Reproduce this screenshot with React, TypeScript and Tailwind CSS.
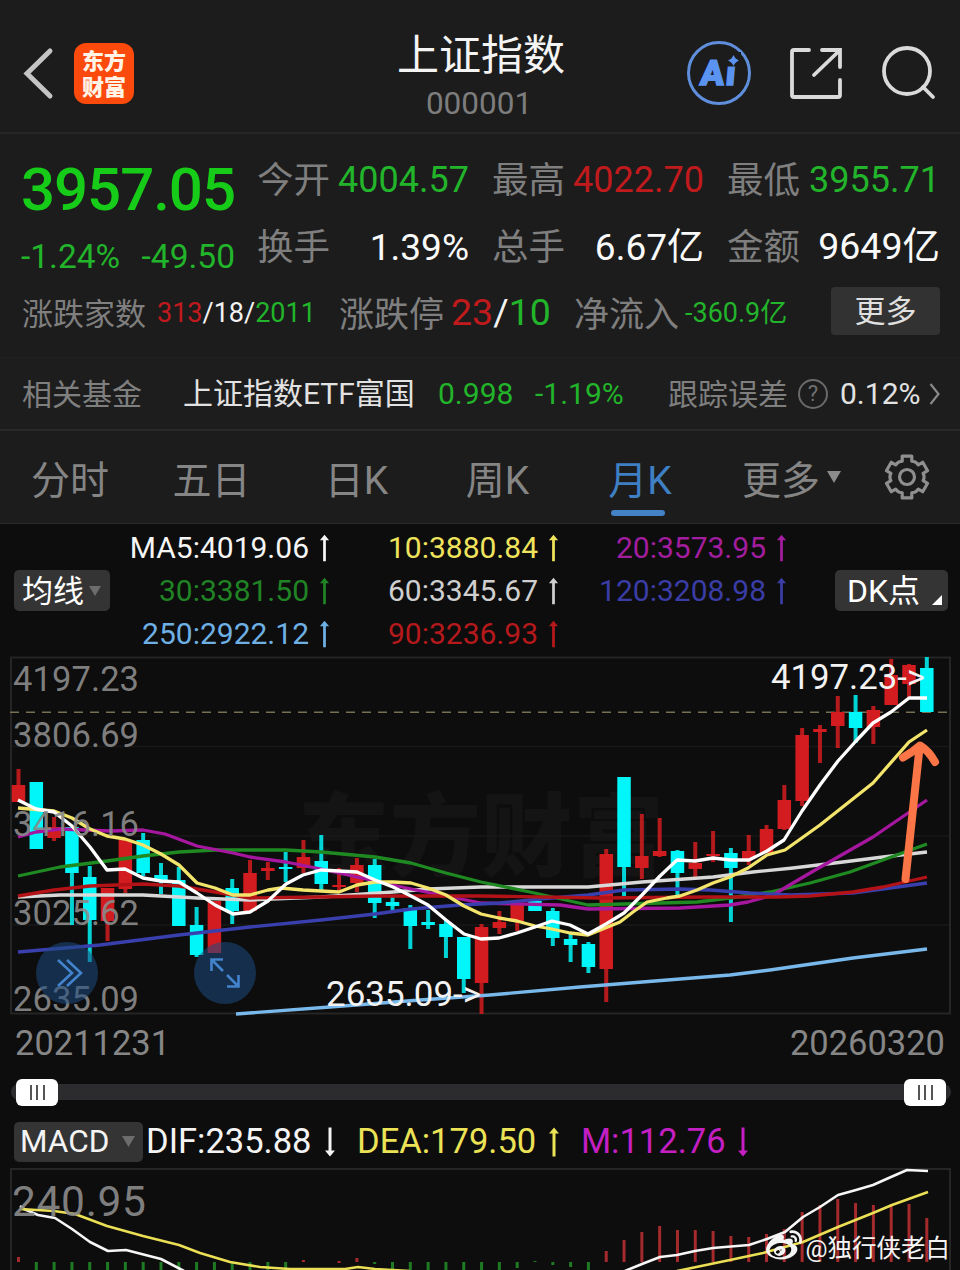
import { clsx } from "clsx";
import { FaWeibo } from "react-icons/fa";

type Candle = [top: number, bottom: number, high: number, low: number, dir: "u" | "d"];
type Point = [number, number];

const START_X = 18.5;
const STEP = 17.81;

const candles: Candle[] = [
  [785, 802, 769, 802, "u"],
  [782, 849, 782, 849, "d"],
  [827, 838, 817, 841, "u"],
  [827, 873, 827, 925, "d"],
  [877, 920, 866, 962, "d"],
  [888, 921, 888, 941, "u"],
  [840, 889, 840, 893, "u"],
  [840, 873, 833, 876, "d"],
  [875, 881, 863, 894, "d"],
  [880, 926, 867, 926, "d"],
  [925, 955, 907, 957, "d"],
  [901, 953, 901, 953, "u"],
  [888, 911, 879, 924, "d"],
  [873, 911, 860, 911, "u"],
  [868, 871, 862, 880, "u"],
  [867, 869, 852, 882, "d"],
  [857, 868, 840, 873, "u"],
  [861, 884, 835, 891, "d"],
  [885, 887, 868, 892, "u"],
  [865, 883, 858, 892, "u"],
  [865, 903, 859, 918, "d"],
  [902, 906, 897, 911, "d"],
  [908, 926, 905, 949, "d"],
  [922, 925, 910, 929, "d"],
  [924, 937, 920, 958, "d"],
  [937, 979, 937, 993, "d"],
  [927, 983, 924, 1014, "u"],
  [922, 928, 911, 934, "u"],
  [904, 921, 902, 931, "u"],
  [901, 911, 897, 911, "d"],
  [911, 938, 908, 946, "d"],
  [939, 945, 932, 962, "d"],
  [944, 967, 942, 973, "d"],
  [854, 969, 849, 1002, "u"],
  [777, 867, 777, 896, "d"],
  [856, 868, 814, 879, "u"],
  [851, 856, 818, 857, "u"],
  [851, 873, 850, 895, "d"],
  [863, 869, 842, 879, "u"],
  [854, 856, 831, 862, "u"],
  [853, 868, 848, 922, "d"],
  [851, 859, 835, 865, "u"],
  [829, 853, 825, 853, "u"],
  [800, 829, 785, 830, "u"],
  [735, 801, 728, 806, "u"],
  [729, 732, 725, 763, "u"],
  [712, 726, 696, 748, "u"],
  [712, 728, 695, 743, "d"],
  [710, 727, 706, 744, "u"],
  [675, 705, 659, 705, "u"],
  [665, 684, 664, 697, "u"],
  [668, 712, 657, 712, "d"],
];

const ma5: Point[] = [
  [18, 800], [36, 809], [54, 812], [72, 826], [90, 847], [107, 870], [125, 869], [143, 878], [161, 881], [179, 882],
  [197, 893], [215, 905], [233, 914], [250, 912], [268, 901], [286, 884], [303, 875], [321, 870], [339, 871],
  [357, 872], [375, 880], [393, 887], [411, 896], [428, 905], [446, 920], [464, 934], [481, 939], [499, 938],
  [517, 933], [535, 927], [552, 921], [570, 925], [588, 934], [606, 924], [624, 913], [642, 895], [660, 876],
  [677, 860], [695, 861], [713, 858], [731, 860], [749, 860], [767, 851], [784, 840], [802, 811], [820, 785],
  [838, 761], [856, 741], [873, 723], [891, 712], [909, 698], [927, 698],
];
const ma10: Point[] = [
  [18, 808], [54, 811], [72, 818], [90, 829], [107, 836], [125, 839], [143, 845], [161, 854], [179, 865], [197, 883],
  [215, 888], [233, 895], [250, 895], [268, 890], [281, 888], [303, 890], [321, 891], [339, 892], [357, 885],
  [375, 882], [393, 882], [411, 883], [428, 888], [446, 895], [464, 906], [481, 914], [499, 918], [517, 921],
  [535, 926], [552, 929], [570, 933], [588, 935], [620, 922], [633, 912], [647, 902], [667, 898], [680, 896],
  [697, 890], [713, 883], [730, 877], [748, 868], [767, 855], [785, 850], [820, 825], [873, 783], [909, 742],
  [927, 730],
];
const ma20: Point[] = [
  [18, 837], [36, 832], [60, 829], [110, 831], [143, 830], [165, 834], [197, 846], [233, 853], [250, 857],
  [286, 862], [321, 869], [357, 877], [375, 881], [411, 889], [446, 896], [481, 903], [560, 905], [588, 909],
  [680, 908], [730, 905], [748, 902], [773, 895], [793, 883], [810, 873], [873, 837], [927, 800],
];
const ma30: Point[] = [
  [18, 876], [60, 867], [107, 861], [143, 856], [179, 852], [215, 850], [286, 850], [321, 852], [375, 857],
  [411, 863], [446, 873], [481, 882], [530, 892], [588, 905], [697, 902], [730, 898], [770, 892], [810, 883],
  [850, 872], [883, 860], [927, 844],
];
const ma60: Point[] = [
  [18, 897], [60, 895], [143, 895], [197, 898], [250, 900], [321, 897], [393, 892], [428, 889], [481, 887],
  [588, 887], [642, 882], [713, 877], [753, 872], [793, 868], [843, 862], [883, 857], [927, 852],
];
const ma90: Point[] = [
  [18, 896], [54, 890], [90, 886], [143, 884], [179, 886], [215, 892], [250, 898], [321, 897], [375, 896],
  [481, 896], [600, 898], [710, 897], [777, 897], [810, 896], [853, 892], [883, 887], [927, 877],
];
const ma120: Point[] = [
  [18, 952], [100, 945], [179, 935], [250, 927], [321, 920], [375, 914], [411, 909], [460, 905], [500, 903],
  [540, 899], [588, 895], [624, 890], [680, 889], [710, 890], [750, 893], [790, 895], [853, 893], [890, 888],
  [927, 883],
];
const ma250: Point[] = [
  [236, 1014], [330, 1007], [420, 1000], [490, 995], [580, 987], [730, 975], [770, 970], [853, 958], [927, 949],
];

const maLines = [
  { pts: ma60, color: "#d8d8d8" },
  { pts: ma30, color: "#1f8a22" },
  { pts: ma20, color: "#a5179f" },
  { pts: ma120, color: "#3a3fae" },
  { pts: ma90, color: "#b31217" },
  { pts: ma250, color: "#78b8ea" },
  { pts: ma10, color: "#f3e46c" },
  { pts: ma5, color: "#ffffff" },
];

const difA: Point[] = [
  [20, 1206], [24, 1209], [38, 1215], [55, 1218], [72, 1229], [90, 1242], [108, 1251], [126, 1250], [161, 1259], [184, 1271],
];
const deaA: Point[] = [
  [20, 1209], [54, 1211], [75, 1214], [107, 1226], [143, 1236], [179, 1245], [200, 1253], [230, 1262], [260, 1267],
  [290, 1269], [345, 1269], [358, 1267], [375, 1269], [410, 1271],
];
const difB: Point[] = [
  [625, 1271], [642, 1264], [660, 1257], [677, 1255], [695, 1251], [713, 1248], [749, 1245], [767, 1239], [785, 1232],
  [803, 1217], [820, 1207], [838, 1195], [856, 1190], [873, 1185], [891, 1177], [907, 1170], [928, 1171],
];
const deaB: Point[] = [
  [677, 1271], [730, 1260], [763, 1253], [803, 1242], [838, 1227], [873, 1213], [892, 1205], [928, 1192],
];

// [candle index, top, bottom]
const redBars: [number, number, number][] = [
  [0, 1257, 1262], [16, 1260, 1262], [18, 1261, 1263], [19, 1258, 1262], [33, 1251, 1262], [34, 1240, 1262],
  [35, 1232, 1262], [36, 1226, 1262], [37, 1230, 1262], [38, 1230, 1262], [39, 1231, 1262], [40, 1236, 1262],
  [41, 1237, 1262], [42, 1234, 1262], [43, 1229, 1262], [44, 1212, 1262], [45, 1205, 1262], [46, 1199, 1262],
  [47, 1203, 1262], [48, 1205, 1262], [49, 1204, 1262], [50, 1204, 1262], [51, 1218, 1262],
];
const greenBars: [number, number, number][] = [
  ...Array.from({ length: 15 }, (_, i) => [i + 1, 1262, 1271] as [number, number, number]),
  [20, 1262, 1264],
  ...Array.from({ length: 7 }, (_, i) => [i + 21, 1262, 1271] as [number, number, number]),
  [28, 1262, 1268], [29, 1261, 1262], [30, 1262, 1265], [31, 1262, 1267], [32, 1262, 1271],
];

const toPoints = (pts: Point[]) => pts.map((p) => p.join(",")).join(" ");

function gearPath(cx: number, cy: number) {
  const out: string[] = [];
  for (let i = 0; i < 6; i++) {
    const base = i * 60 - 90;
    const steps: Point[] = [[-26, 17], [-17, 16.5], [-13, 21.5], [13, 21.5], [17, 16.5], [26, 17]];
    steps.forEach(([a, r]) => {
      const t = ((base + a) * Math.PI) / 180;
      out.push(`${(cx + r * Math.cos(t)).toFixed(1)} ${(cy + r * Math.sin(t)).toFixed(1)}`);
    });
  }
  return `M${out.join("L")}Z`;
}

function Trend({ down = false, className }: { down?: boolean; className?: string }) {
  return (
    <svg viewBox="0 0 12 30" className={clsx("shrink-0", down && "rotate-180", className)} fill="currentColor">
      <path d="M6 0.500 11 6.500H7.500V29.500H4.500V6.500H1Z" />
    </svg>
  );
}

function Header() {
  return (
    <header className="flex h-[134px] shrink-0 items-start border-b-2 border-[#262626] pl-[22px]">
      <svg viewBox="0 0 32 54" className="mt-[46px] h-[54px] w-8" fill="none" stroke="#c4c4c4" strokeWidth="5">
        <path d="M28 5 5 27.500 28 50" strokeLinecap="round" />
      </svg>
      <div className="mt-[43px] ml-5 flex h-[61px] w-[60px] flex-col items-center justify-center rounded-[12px] bg-[#fb4a0b] pt-0.5 text-[22px] leading-[26px] font-black text-[#fff3e6]">
        <span>东方</span>
        <span>财富</span>
      </div>
      <div className="ml-[247px] flex w-[200px] flex-col items-center">
        <h1 className="mt-[35px] text-[42px] leading-[42px] font-normal text-[#f4f4f4]">上证指数</h1>
        <span className="mt-[11px] -ml-1 text-[31.500px] leading-8 text-[#7d7d7d]">000001</span>
      </div>
      <svg viewBox="0 0 66 66" className="mt-10 ml-[105px] h-[66px] w-[66px]">
        <circle cx="33" cy="33" r="30.500" fill="none" stroke="#5f8fdc" strokeWidth="3" />
        <text
          x="14 39.500"
          y="45.500"
          fontFamily="Roboto"
          fontWeight="900"
          fontSize="35"
          transform="skewX(-5) translate(3.500 0)"
          fill="#5b93f0"
          stroke="#5b93f0"
          strokeWidth="1.500"
        >
          Ai
        </text>
        <rect x="40" y="12" width="15" height="14.500" fill="#1c1c1c" />
        <path d="M47.500 15q1.500 4 5.500 5.500-4 1.500-5.500 5.500-1.500-4-5.500-5.500 4-1.500 5.500-5.500Z" fill="#5b93f0" />
      </svg>
      <svg
        viewBox="0 0 56 56"
        className="mt-[45px] ml-[36px] h-14 w-14"
        fill="none"
        stroke="#dadada"
        strokeWidth="3.800"
        strokeLinecap="round"
      >
        <path d="M21 5H6Q4 5 4 7V50Q4 52 6 52H50Q52 52 52 50V35" />
        <path d="M34 5H52V22M51 6 26 30" />
      </svg>
      <svg viewBox="0 0 58 58" className="mt-[44px] ml-[36px] h-[58px] w-[58px]" fill="none" stroke="#dadada" strokeWidth="3.800">
        <circle cx="27" cy="27" r="23" />
        <path d="M43 43 53 53" strokeLinecap="round" />
      </svg>
    </header>
  );
}

function Stat({ label, value, className }: { label: string; value: string; className: string }) {
  return (
    <div className="flex h-[66px] items-center justify-between text-[36.500px] leading-none whitespace-nowrap">
      <span className="pt-[3px] text-[#7f7f7f]">{label}</span>
      <span className={className}>{value}</span>
    </div>
  );
}

function Quote() {
  return (
    <section className="h-[223px] shrink-0 pt-[13px]">
      <div className="flex pl-[22px]">
        <div className="w-[213px] text-[#22b42a]">
          <div className="-ml-px flex h-[84px] items-center pt-0.5 text-[60px] leading-none font-medium tracking-[-1.050px] text-[#16cc18]">
            3957.05
          </div>
          <div className="flex h-[50px] items-center justify-between pt-0.5 text-[33.500px] leading-none">
            <span className="-ml-px">-1.24%</span>
            <span>-49.50</span>
          </div>
        </div>
        <div className="ml-[22px] grid w-[683px] grid-cols-[212px_212px_213px] gap-x-[23px]">
          <Stat label="今开" value="4004.57" className="text-[36px] text-[#22b42a]" />
          <Stat label="最高" value="4022.70" className="text-[36px] text-[#c01a1c]" />
          <Stat label="最低" value="3955.71" className="text-[36px] text-[#22b42a]" />
          <Stat label="换手" value="1.39%" className="text-[37px] text-[#fafafa]" />
          <Stat label="总手" value="6.67亿" className="text-[37px] text-[#fafafa]" />
          <Stat label="金额" value="9649亿" className="text-[37.500px] text-[#fafafa]" />
        </div>
      </div>
      <div className="flex h-[64px] items-center pl-[22px] leading-none whitespace-nowrap">
        <span className="w-[135px] pt-0.5 text-[31px] text-[#7f7f7f]">涨跌家数</span>
        <span className="w-[182px] text-[27px] text-[#f2f2f2]">
          <b className="font-normal text-[#c01a1c]">313</b>/18/<b className="font-normal text-[#22b42a]">2011</b>
        </span>
        <span className="w-[112px] pt-1 text-[35px] text-[#7f7f7f]">涨跌停</span>
        <span className="w-[123px] text-[37.500px] text-[#f2f2f2]">
          <b className="font-normal text-[#c01a1c]">23</b>/<b className="font-normal text-[#22b42a]">10</b>
        </span>
        <span className="w-[111px] pt-1 text-[35px] text-[#7f7f7f]">净流入</span>
        <span className="w-[146px] text-[27px] text-[#22b42a]">-360.9亿</span>
        <button className="-mt-1 h-12 w-[109px] rounded-[4px] bg-[#323232] text-[31px] leading-none text-[#e0e0e0]">更多</button>
      </div>
    </section>
  );
}

function FundRow() {
  return (
    <section className="flex h-[74px] shrink-0 items-center border-t border-b-2 border-t-[#202020] border-b-[#292929] bg-[#1d1d1d] pl-[22px] text-[30px] leading-none whitespace-nowrap">
      <span className="w-[161px] pt-0.5 text-[#7f7f7f]">相关基金</span>
      <span className="w-[255px] pt-px text-[#e2e2e2]">上证指数ETF富国</span>
      <span className="w-[97px] text-[#22b42a]">0.998</span>
      <span className="w-[133px] text-[#22b42a]">-1.19%</span>
      <span className="w-[130px] pt-0.5 text-[#7f7f7f]">跟踪误差</span>
      <span className="flex h-[30px] w-[30px] items-center justify-center rounded-full border-2 border-[#6a6a6a] text-[22px] text-[#6f6f6f]">
        ?
      </span>
      <span className="ml-3 w-[89px] text-[#e2e2e2]">0.12%</span>
      <svg viewBox="0 0 12 24" className="h-6 w-3" fill="none" stroke="#8a8a8a" strokeWidth="2.200">
        <path d="m1.500 2 8 10-8 10" />
      </svg>
    </section>
  );
}

function Tabs() {
  return (
    <nav className="grid h-[93px] shrink-0 grid-cols-[140px_143px_147px_135px_150px_150px_85px] border-b border-[#2b2b2b] text-[39px] leading-none text-[#858585]">
      {["分时", "五日", "日K", "周K", "月K"].map((tab) => (
        <div key={tab} className={clsx("relative flex items-center justify-center pt-[8px]", tab === "月K" && "text-[#3f7fc4]")}>
          {tab}
          {tab === "月K" && <i className="absolute bottom-[7px] left-[46px] h-[6px] w-[54px] rounded-full bg-[#4482c6]" />}
        </div>
      ))}
      <div className="flex items-center pt-[8px] pl-[27px]">
        更多
        <svg viewBox="0 0 14 12" className="-mt-2 ml-[7px] h-3 w-3.5" fill="#8b8b8b">
          <path d="M0 0H14L7 12Z" />
        </svg>
      </div>
      <svg viewBox="0 0 50 50" className="mt-[21px] ml-[17px] h-[50px] w-[50px]" fill="none" stroke="#8f8f8f" strokeWidth="3.200">
        <path d={gearPath(25, 25)} strokeLinejoin="round" />
        <circle cx="25" cy="25" r="7.500" />
      </svg>
    </nav>
  );
}

const maLegend = [
  { text: "MA5:4019.06", color: "text-[#f5f5f5]" },
  { text: "10:3880.84", color: "text-[#f0e45c]" },
  { text: "20:3573.95", color: "text-[#a31d9f]" },
  { text: "30:3381.50", color: "text-[#208425]" },
  { text: "60:3345.67", color: "text-[#cfcfcf]" },
  { text: "120:3208.98", color: "text-[#3b3da6]" },
  { text: "250:2922.12", color: "text-[#6fb0e4]" },
  { text: "90:3236.93", color: "text-[#b5191c]" },
];

function MaLegend() {
  return (
    <section className="flex h-[132px] shrink-0 items-start pl-[14px] whitespace-nowrap">
      <button className="mt-[46px] flex h-[41px] w-24 items-center rounded-[5px] bg-[#343434] pt-px pl-2 text-[31px] leading-none text-white">
        均线
        <svg viewBox="0 0 12 10" className="ml-[5px] h-2.5 w-3" fill="#6c6c6c">
          <path d="M0 0H12L6 10Z" />
        </svg>
      </button>
      <div className="mt-[3px] grid w-[677px] grid-cols-[220px_229px_228px]">
        {maLegend.map((m) => (
          <div key={m.text} className={clsx("flex h-[42.700px] items-center justify-end text-[30px] leading-none", m.color)}>
            {m.text}
            <Trend className="ml-[10px] h-[28px] w-[11px]" />
          </div>
        ))}
      </div>
      <button className="relative mt-[46px] ml-[48px] flex h-[41px] w-[113px] items-center rounded-[5px] bg-[#343434] pt-px pl-[12px] text-[32px] leading-none text-white">
        DK点
        <svg viewBox="0 0 10 10" className="absolute right-[6px] bottom-[6px] h-2.5 w-2.5" fill="#fff">
          <path d="M10 0V10H0Z" />
        </svg>
      </button>
    </section>
  );
}

function KChart() {
  const labels: [string, number][] = [
    ["4197.23", 691], ["3806.69", 746.5], ["3416.16", 835.5], ["3025.62", 925], ["2635.09", 1011],
  ];
  return (
    <section className="relative h-[363px] shrink-0">
      <svg viewBox="0 656 960 363" className="block h-[363px] w-[960px]" fontFamily="Roboto">
        <text x="298" y="869" fontFamily="Noto Sans CJK SC" fontWeight="900" fontSize="91" textLength="366" fill="#141414">
          东方财富
        </text>
        <g stroke="#181818" strokeWidth="1.500">
          <path d="M11 746.500H950M11 836H950M11 925H950" />
          <path d="M11 657.500H950V1013.500H11Z" fill="none" stroke="#252525" strokeWidth="2" />
        </g>
        <path d="M10 712.200H950" stroke="#777052" strokeWidth="1.500" strokeDasharray="9 7" />
        {candles.map(([top, bottom, high, low, dir], i) => {
          const x = START_X + i * STEP;
          return (
            <g key={i} fill={dir === "u" ? "#d21c1f" : "#00f6f8"}>
              <rect x={x - 2} y={high} width="4" height={low - high} opacity="0.85" />
              <rect x={x - 6.75} y={top} width="13.500" height={bottom - top} />
            </g>
          );
        })}
        {maLines.map((l) => (
          <polyline
            key={l.color}
            points={toPoints(l.pts)}
            fill="none"
            stroke={l.color}
            strokeWidth="3.300"
            strokeLinejoin="round"
          />
        ))}
        {labels.map(([label, y]) => (
          <text key={label} x="13" y={y} fontSize="34.500" textLength="126" fill="#8a8a8a" fillOpacity="0.92">
            {label}
          </text>
        ))}
        <text x="326" y="1006" fontSize="34.500" textLength="155" lengthAdjust="spacingAndGlyphs" fill="#f2f2f2">
          2635.09-&gt;
        </text>
        <text x="771" y="689" fontSize="34.500" textLength="154" lengthAdjust="spacingAndGlyphs" fill="#f2f2f2">
          4197.23-&gt;
        </text>
        <g fill="none" stroke="#fb7547" strokeWidth="8" strokeLinecap="round" strokeLinejoin="round">
          <path d="M905.500 879 919.500 748" />
          <path d="M903 757.500Q913 752 920 745.500 929 751 935 762" />
        </g>
      </svg>
      <button className="absolute top-[286px] left-[36px] flex h-[62px] w-[62px] items-center justify-center rounded-full bg-[#1d4a80]/55">
        <svg viewBox="0 0 34 30" className="ml-1 h-[30px] w-[34px]" fill="none" stroke="#4383cc" strokeWidth="2.600">
          <path d="M6 2 20 15 6 28M15 2 29 15 15 28" />
        </svg>
      </button>
      <button className="absolute top-[286px] left-[194px] flex h-[62px] w-[62px] items-center justify-center rounded-full bg-[#1d4a80]/55">
        <svg viewBox="0 0 32 32" className="h-8 w-8" fill="none" stroke="#4383cc" strokeWidth="2.600">
          <path d="M14 2.500H2.500V14M2.500 2.500 14 14M18 29.500H29.500V18M29.500 29.500 18 18" />
        </svg>
      </button>
    </section>
  );
}

function Handle() {
  return (
    <div className="flex h-[27px] w-[42px] items-center justify-center gap-[4.500px] rounded-[6px] bg-white">
      <i className="h-[15px] w-[2px] bg-[#555]" />
      <i className="h-[15px] w-[2px] bg-[#555]" />
      <i className="h-[15px] w-[2px] bg-[#555]" />
    </div>
  );
}

function Range() {
  return (
    <section className="h-[101px] shrink-0">
      <div className="flex h-[48px] items-center justify-between pr-[15px] pl-[15px] text-[34.500px] leading-none text-[#868686]">
        <span>20211231</span>
        <span>20260320</span>
      </div>
      <div className="mt-[17px] ml-[11px] flex h-4 w-[940px] items-center justify-between rounded-full bg-[#2c2c2e] px-[5px]">
        <Handle />
        <Handle />
      </div>
    </section>
  );
}

function Macd() {
  return (
    <section className="relative shrink-0">
      <div className="flex h-[44px] items-center pb-px pl-[14px] text-[34.500px] leading-none whitespace-nowrap">
        <button className="flex h-10 w-[129px] items-center rounded-[5px] bg-[#343434] pl-[6px] text-[31.500px] text-[#f4f4f4]">
          MACD
          <svg viewBox="0 0 13 11" className="ml-[13px] h-[11px] w-[13px]" fill="#6c6c6c">
            <path d="M0 0H13L6.500 11Z" />
          </svg>
        </button>
        <span className="ml-[3px] flex w-[211px] items-center text-[#f4f4f4]">
          DIF:235.88
          <Trend down className="ml-[12px] h-[32px] w-[12px]" />
        </span>
        <span className="flex w-[224px] items-center text-[#ece256]">
          DEA:179.50
          <Trend className="ml-[12px] h-[32px] w-[12px]" />
        </span>
        <span className="flex items-center text-[#c41fc2]">
          M:112.76
          <Trend down className="ml-[11px] h-[32px] w-[12px]" />
        </span>
      </div>
      <svg viewBox="0 1164 960 106" className="block h-[106px] w-[960px]" fontFamily="Roboto">
        <path d="M11 1275V1169H950V1275" fill="none" stroke="#252525" strokeWidth="2" />
        {redBars.map(([i, top, bottom]) => (
          <rect key={i} x={START_X + i * STEP - 1.5} y={top} width="3" height={bottom - top} fill="#a52a2c" />
        ))}
        {greenBars.map(([i, top, bottom]) => (
          <rect key={i} x={START_X + i * STEP - 1.5} y={top} width="3" height={bottom - top} fill="#1f7a24" />
        ))}
        <g fill="none" strokeWidth="2.600" strokeLinejoin="round">
          <polyline points={toPoints(difA)} stroke="#f6f6f6" />
          <polyline points={toPoints(difB)} stroke="#f6f6f6" />
          <polyline points={toPoints(deaA)} stroke="#eadf55" />
          <polyline points={toPoints(deaB)} stroke="#eadf55" />
        </g>
        <text x="12" y="1216" fontSize="42.500" textLength="134" fill="#8a8a8a" fillOpacity="0.92">
          240.95
        </text>
      </svg>
      <div className="absolute right-[10px] bottom-[6px] flex items-center text-[24.500px] leading-none text-[#f4f4f4]">
        <FaWeibo className="mr-1 h-[36px] w-[36px]" />
        <span className="pt-[7px]">@独行侠老白</span>
      </div>
    </section>
  );
}

export default function App() {
  return (
    <main className="flex h-[1270px] w-[960px] flex-col overflow-hidden bg-[#0d0d0d] font-['Roboto','Noto_Sans_CJK_SC',sans-serif]">
      <div className="flex shrink-0 flex-col bg-[#1c1c1c]">
        <Header />
        <Quote />
        <FundRow />
        <Tabs />
      </div>
      <MaLegend />
      <KChart />
      <Range />
      <Macd />
    </main>
  );
}
